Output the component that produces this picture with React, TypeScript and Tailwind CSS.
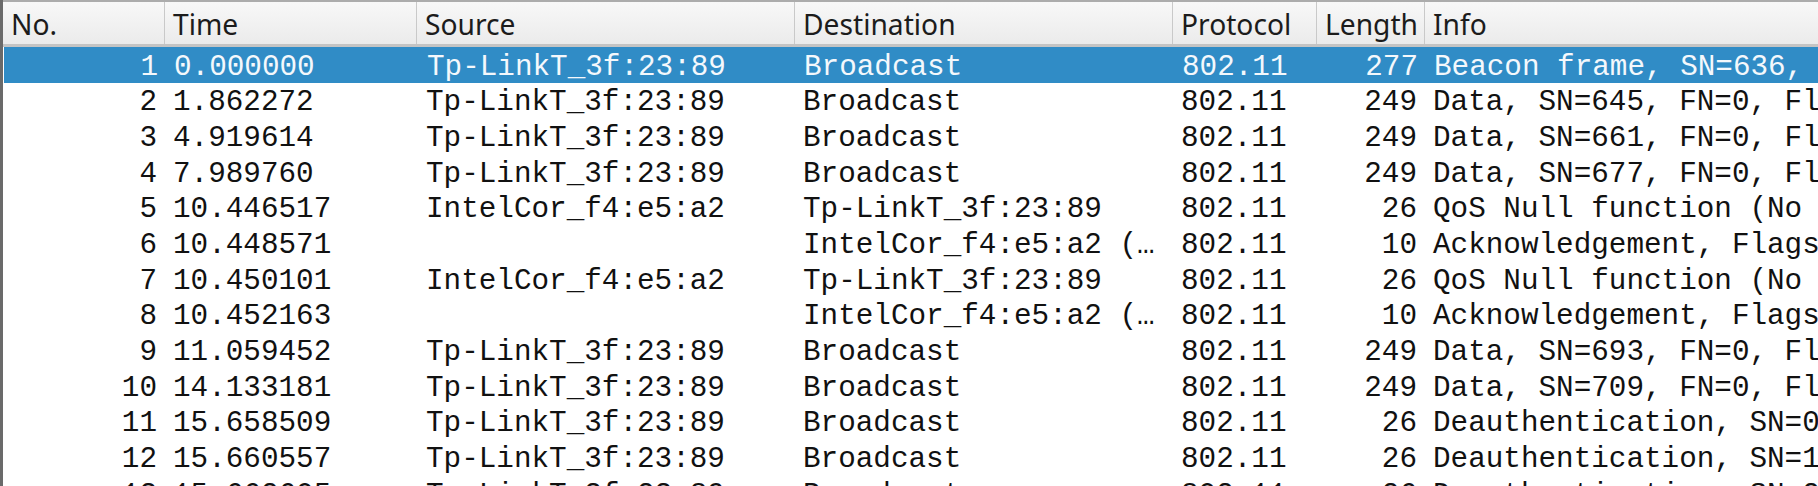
import React from "react";

type Row = {
  no: number;
  time: string;
  src: string;
  dst: string;
  proto: string;
  len: string;
  info: string;
};

const rows: Row[] = [
  { no: 1, time: "0.000000", src: "Tp-LinkT_3f:23:89", dst: "Broadcast", proto: "802.11", len: "277", info: "Beacon frame, SN=636, FN=0, Flags=........C, BI=100, SSID=TP-LINK" },
  { no: 2, time: "1.862272", src: "Tp-LinkT_3f:23:89", dst: "Broadcast", proto: "802.11", len: "249", info: "Data, SN=645, FN=0, Flags=.p....F.C" },
  { no: 3, time: "4.919614", src: "Tp-LinkT_3f:23:89", dst: "Broadcast", proto: "802.11", len: "249", info: "Data, SN=661, FN=0, Flags=.p....F.C" },
  { no: 4, time: "7.989760", src: "Tp-LinkT_3f:23:89", dst: "Broadcast", proto: "802.11", len: "249", info: "Data, SN=677, FN=0, Flags=.p....F.C" },
  { no: 5, time: "10.446517", src: "IntelCor_f4:e5:a2", dst: "Tp-LinkT_3f:23:89", proto: "802.11", len: "26", info: "QoS Null function (No data), SN=0, FN=0" },
  { no: 6, time: "10.448571", src: "", dst: "IntelCor_f4:e5:a2 (…", proto: "802.11", len: "10", info: "Acknowledgement, Flags=........C" },
  { no: 7, time: "10.450101", src: "IntelCor_f4:e5:a2", dst: "Tp-LinkT_3f:23:89", proto: "802.11", len: "26", info: "QoS Null function (No data), SN=1, FN=0" },
  { no: 8, time: "10.452163", src: "", dst: "IntelCor_f4:e5:a2 (…", proto: "802.11", len: "10", info: "Acknowledgement, Flags=........C" },
  { no: 9, time: "11.059452", src: "Tp-LinkT_3f:23:89", dst: "Broadcast", proto: "802.11", len: "249", info: "Data, SN=693, FN=0, Flags=.p....F.C" },
  { no: 10, time: "14.133181", src: "Tp-LinkT_3f:23:89", dst: "Broadcast", proto: "802.11", len: "249", info: "Data, SN=709, FN=0, Flags=.p....F.C" },
  { no: 11, time: "15.658509", src: "Tp-LinkT_3f:23:89", dst: "Broadcast", proto: "802.11", len: "26", info: "Deauthentication, SN=0, FN=0, Flags=........C" },
  { no: 12, time: "15.660557", src: "Tp-LinkT_3f:23:89", dst: "Broadcast", proto: "802.11", len: "26", info: "Deauthentication, SN=1, FN=0, Flags=........C" },
  { no: 13, time: "15.662605", src: "Tp-LinkT_3f:23:89", dst: "Broadcast", proto: "802.11", len: "26", info: "Deauthentication, SN=2, FN=0, Flags=........C" },
];

const headers = ["No.", "Time", "Source", "Destination", "Protocol", "Length", "Info"];

const grid = "grid grid-cols-[162px_252px_378px_378px_144px_108px_1fr]";

export default function App() {
  return (
    <div className="w-[1818px] h-[486px] overflow-hidden bg-white border-l-[3px] border-[#6a6a6a]">
      {/* header */}
      <div
        className={`${grid} h-[47px] border-t-2 border-b-[3px] border-t-[#acacac] border-b-[#c4c4c4] bg-gradient-to-b from-[#f8f8f8] to-[#ebebeb]`}
        style={{ fontFamily: '"Noto Sans", sans-serif' }}
      >
        {headers.map((h, i) => (
          <div
            key={h}
            className={`flex items-center pl-[8px] pt-[3px] text-[28.2px] text-[#1c1c1c] whitespace-nowrap overflow-hidden ${
              i < headers.length - 1 ? "border-r-[1.5px] border-[#c9c9c9]" : ""
            } ${i === 0 ? "pl-[6px]" : ""}`}
          >
            {h}
          </div>
        ))}
      </div>
      {/* body */}
      <div
        className="text-[29.3px]"
        style={{ fontFamily: '"Liberation Mono", monospace' }}
      >
        {rows.map((r) => {
          const sel = r.no === 1;
          return (
            <div
              key={r.no}
              className={`${grid} h-[35.7px] leading-[35.7px] whitespace-nowrap ${
                sel ? "bg-[#308cc6] text-[#f4f8fc] ml-[1px]" : "text-[#111111]"
              }`}
            >
              <div className="text-right pr-[8px] pt-[2.5px] overflow-x-clip">{r.no}</div>
              <div className="pl-[8px] pt-[2.5px] overflow-x-clip">{r.time}</div>
              <div className="pl-[9px] pt-[2.5px] overflow-x-clip">{r.src}</div>
              <div className="pl-[8px] pt-[2.5px] overflow-x-clip">{r.dst}</div>
              <div className="pl-[8px] pt-[2.5px] overflow-x-clip">{r.proto}</div>
              <div className="text-right pr-[8px] pt-[2.5px] overflow-x-clip">{r.len}</div>
              <div className="pl-[8px] pt-[2.5px] overflow-x-clip">{r.info}</div>
            </div>
          );
        })}
      </div>
    </div>
  );
}
